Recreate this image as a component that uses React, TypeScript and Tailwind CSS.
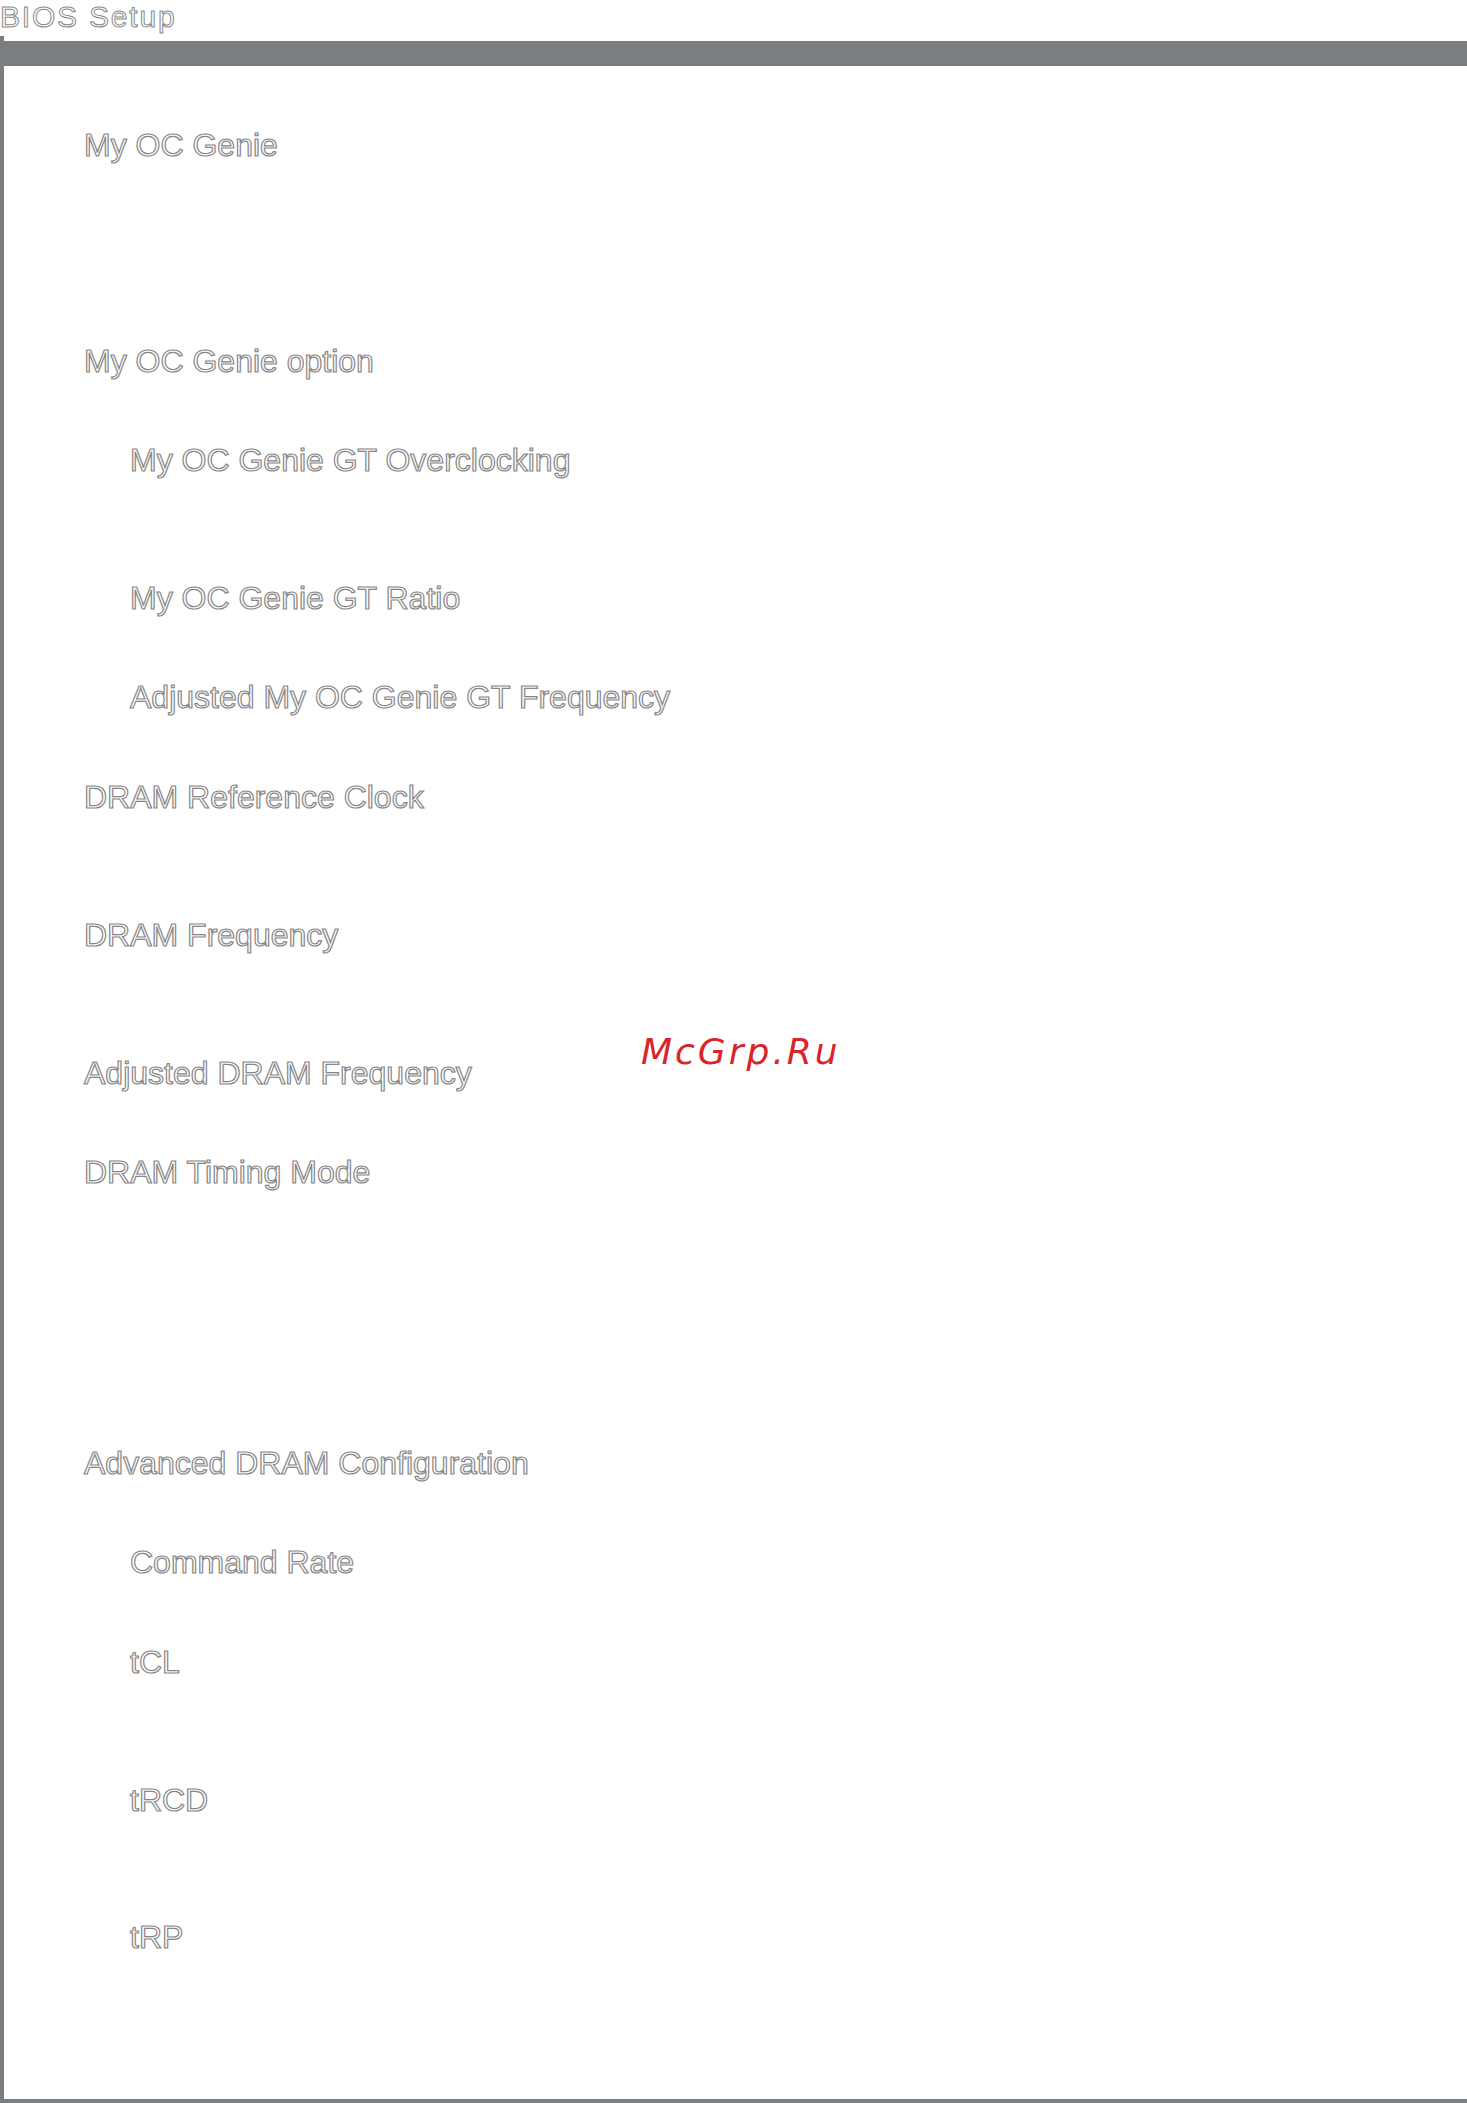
import React from "react";

// Outlined item labels of the OC page, top to bottom
const items = [
  { label: "My OC Genie", sub: false, gap: "mt-[63px]" },
  { label: "My OC Genie option", sub: false, gap: "mt-[184px]" },
  { label: "My OC Genie GT Overclocking", sub: true, gap: "mt-[67px]" },
  { label: "My OC Genie GT Ratio", sub: true, gap: "mt-[106px]" },
  { label: "Adjusted My OC Genie GT Frequency", sub: true, gap: "mt-[67px]" },
  { label: "DRAM Reference Clock", sub: false, gap: "mt-[68px]" },
  { label: "DRAM Frequency", sub: false, gap: "mt-[106px]" },
  { label: "Adjusted DRAM Frequency", sub: false, gap: "mt-[106px]" },
  { label: "DRAM Timing Mode", sub: false, gap: "mt-[67px]" },
  { label: "Advanced DRAM Configuration", sub: false, gap: "mt-[259px]" },
  { label: "Command Rate", sub: true, gap: "mt-[67px]" },
  { label: "tCL", sub: true, gap: "mt-[68px]" },
  { label: "tRCD", sub: true, gap: "mt-[106px]" },
  { label: "tRP", sub: true, gap: "mt-[105px]" },
];

const outline = "text-white [-webkit-text-stroke:1.2px_#868686]";

const App = () => {
  return (
    <div className="relative w-[1467px] h-[2103px] bg-white font-['Liberation_Sans',Arial,sans-serif] overflow-hidden">
      {/* page header */}
      <div className="h-[36px]">
        <div className="text-[30px] leading-[34px] tracking-[1.8px] [-webkit-text-stroke:1px_#8a8a8a] text-white">
          BIOS Setup
        </div>
      </div>

      {/* framed page body */}
      <div className="h-[2067px] border-l-4 border-b-4 border-[#7b7e81] pt-[5px]">
        <div className="h-[25px] bg-[#7b7e81]" />
        <div className="flex flex-col pl-[80px]">
          {items.map((item) => (
            <div
              key={item.label}
              className={`${item.gap} ${item.sub ? "pl-[46px]" : ""} text-[32px] leading-[32px] ${outline}`}
            >
              {item.label}
            </div>
          ))}
        </div>
      </div>

      {/* watermark */}
      <div className="absolute left-[641px] top-[1034px] text-[36px] leading-[36px] italic tracking-[3px] text-[#d7252a] font-['DejaVu_Sans',sans-serif]">
        McGrp.Ru
      </div>
    </div>
  );
};

export default App;
